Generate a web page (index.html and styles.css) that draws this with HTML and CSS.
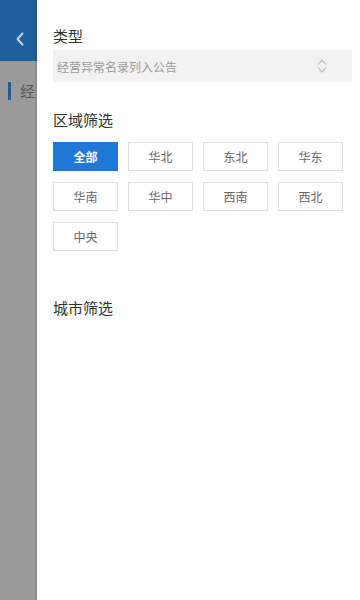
FILE: index.html
```html
<!DOCTYPE html>
<html lang="zh">
<head>
<meta charset="utf-8">
<link rel="stylesheet" href="styles.css">
</head>
<body>
<div class="page">
  <aside class="strip">
    <div class="strip-head">
      <svg class="back" width="10" height="14" viewBox="0 0 10 14"><path d="M7.5 1.5 L2.5 7 L7.5 12.5" fill="none" stroke="#c3d1df" stroke-width="2" stroke-linecap="round" stroke-linejoin="round"/></svg>
    </div>
    <div class="strip-tab">
      <span class="tab-bar"></span>
      <span class="tab-text">经</span>
    </div>
  </aside>
  <main class="drawer">
    <div class="title first">类型</div>
    <div class="select">
      <span class="select-text">经营异常名录列入公告</span>
      <svg class="updown" width="10" height="16" viewBox="0 0 10 16"><path d="M1.5 6 L5 2 L8.5 6 M1.5 10 L5 14 L8.5 10" fill="none" stroke="#c4c4c4" stroke-width="1.2" stroke-linecap="round" stroke-linejoin="round"/></svg>
    </div>
    <div class="title region">区域筛选</div>
    <div class="grid">
      <div class="btn active">全部</div>
      <div class="btn">华北</div>
      <div class="btn">东北</div>
      <div class="btn">华东</div>
      <div class="btn">华南</div>
      <div class="btn">华中</div>
      <div class="btn">西南</div>
      <div class="btn">西北</div>
      <div class="btn">中央</div>
    </div>
    <div class="title city">城市筛选</div>
  </main>
</div>
</body>
</html>
```

FILE: styles.css
```css
* { box-sizing: border-box; }
html, body {
  margin: 0;
  padding: 0;
  width: 360px;
  height: 600px;
  overflow: hidden;
  font-family: "Noto Sans CJK SC", "Noto Sans", sans-serif;
}
.page {
  display: flex;
  width: 360px;
  height: 600px;
}
.strip {
  width: 37px;
  flex: none;
  background: #9a9a9a;
  overflow: hidden;
}
.strip-head {
  height: 61px;
  background: #1f5e9d;
  display: flex;
  align-items: flex-start;
  padding: 32px 0 0 15px;
}
.strip-tab {
  display: flex;
  align-items: center;
  height: 18px;
  margin-top: 21px;
  white-space: nowrap;
}
.tab-bar {
  width: 3px;
  height: 18px;
  background: #245a96;
  margin-left: 8px;
  flex: none;
}
.tab-text {
  margin-left: 9px;
  font-size: 15px;
  line-height: 18px;
  color: #585858;
}
.drawer {
  flex: 1;
  background: #fff;
  padding: 26px 8px 0 16px;
  box-shadow: -1px 0 2px rgba(0,0,0,0.15);
}
.title {
  font-size: 15px;
  line-height: 20px;
  color: #333;
}
.select {
  margin-top: 4px;
  height: 32px;
  background: #f2f2f2;
  display: flex;
  align-items: center;
  justify-content: space-between;
  padding: 0 25px 0 4px;
}
.select-text {
  font-size: 12px;
  color: #9a9a9a;
}
.updown { display: block; }
.region { margin-top: 28px; }
.grid {
  margin-top: 12px;
  display: grid;
  grid-template-columns: repeat(4, 65px);
  grid-auto-rows: 29px;
  column-gap: 10px;
  row-gap: 11px;
}
.btn {
  border: 1px solid #dedede;
  display: flex;
  align-items: center;
  justify-content: center;
  font-size: 12px;
  color: #666;
}
.btn.active {
  background: #1f78d6;
  border-color: #1f78d6;
  color: #fff;
  font-weight: bold;
}
.city { margin-top: 47px; }
```
